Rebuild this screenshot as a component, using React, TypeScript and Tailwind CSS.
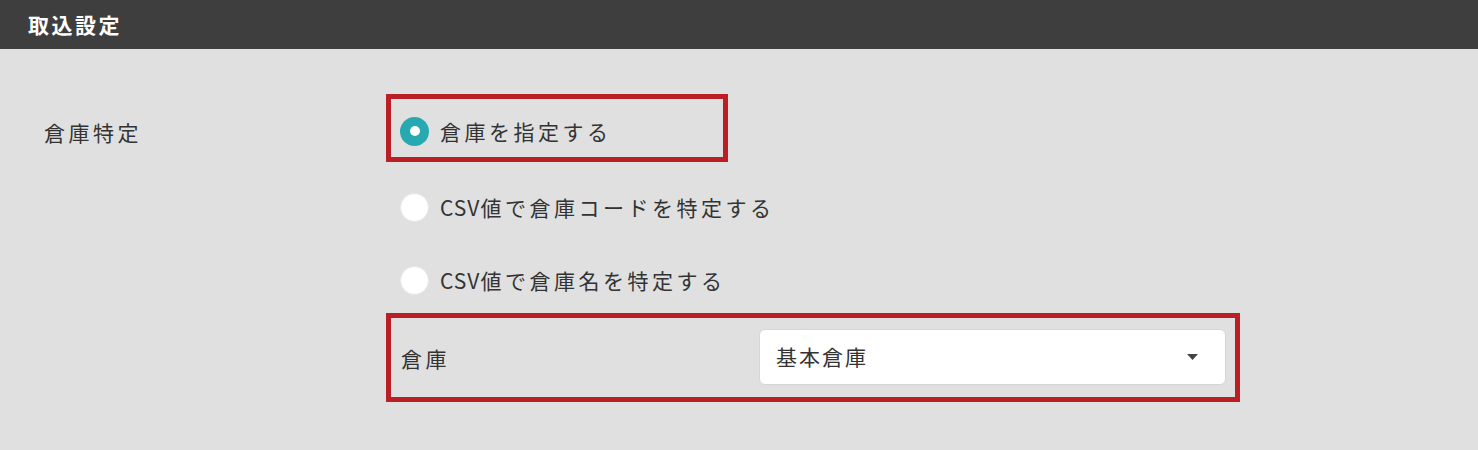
import React from "react";

const font = { fontFamily: '"Noto Sans CJK JP", "Noto Sans", sans-serif' };

function Label({ text }: { text: string }) {
  if (text.startsWith("CSV")) {
    return (
      <span className="ml-[11px] text-[21px] tracking-[3.5px] text-[#333333] leading-none">
        <span className="tracking-[1px]">CSV</span>
        {text.slice(3)}
      </span>
    );
  }
  return (
    <span className="ml-[11px] text-[21px] tracking-[3.5px] text-[#333333] leading-none">{text}</span>
  );
}

function Radio({ checked, label }: { checked?: boolean; label: string }) {
  return (
    <div className="flex items-center">
      {checked ? (
        <span className="w-[29px] h-[29px] rounded-full bg-[#27a9b1] flex items-center justify-center shrink-0">
          <span className="w-[10px] h-[10px] rounded-full bg-white" />
        </span>
      ) : (
        <span className="w-[29px] h-[29px] rounded-full bg-white border border-[#e8e8e8] shrink-0" />
      )}
      <Label text={label} />
    </div>
  );
}

export default function App() {
  return (
    <div className="w-[1478px] h-[450px] bg-[#e0e0e0] overflow-hidden" style={font}>
      <div className="h-[49px] bg-[#3e3e3e] flex items-center pl-[28px]">
        <span className="text-white font-bold text-[21px] tracking-[2.5px] leading-none">取込設定</span>
      </div>
      <div className="flex pt-[45px]">
        <div className="w-[386px] pl-[44px] pt-[28px]">
          <span className="text-[21px] tracking-[3.5px] text-[#333333] leading-none">倉庫特定</span>
        </div>
        <div className="flex flex-col">
          <div className="w-[342px] h-[68px] border-[5px] border-[#b91f24] flex items-center pl-[9px] pt-[6px]">
            <Radio checked label="倉庫を指定する" />
          </div>
          <div className="mt-[31px] h-[28px] flex items-center pl-[14px]">
            <Radio label="CSV値で倉庫コードを特定する" />
          </div>
          <div className="mt-[45px] h-[28px] flex items-center pl-[14px]">
            <Radio label="CSV値で倉庫名を特定する" />
          </div>
          <div className="mt-[19px] w-[854px] h-[89px] border-[5px] border-[#b91f24] flex items-center pl-[10px] pr-[9px] pt-[2px]">
            <span className="w-[358px] text-[21px] tracking-[3.5px] text-[#333333] leading-none">倉庫</span>
            <div className="w-[467px] h-[56px] -mt-[4px] bg-white border border-[#d6d6d6] rounded-[6px] flex items-center justify-between pl-[16px] pr-[27px]">
              <span className="text-[21px] tracking-[2px] text-[#333333] leading-none">基本倉庫</span>
              <svg width="11" height="6" viewBox="0 0 11 6">
                <path d="M0 0 L11 0 L5.5 6 Z" fill="#444444" />
              </svg>
            </div>
          </div>
        </div>
      </div>
    </div>
  );
}
